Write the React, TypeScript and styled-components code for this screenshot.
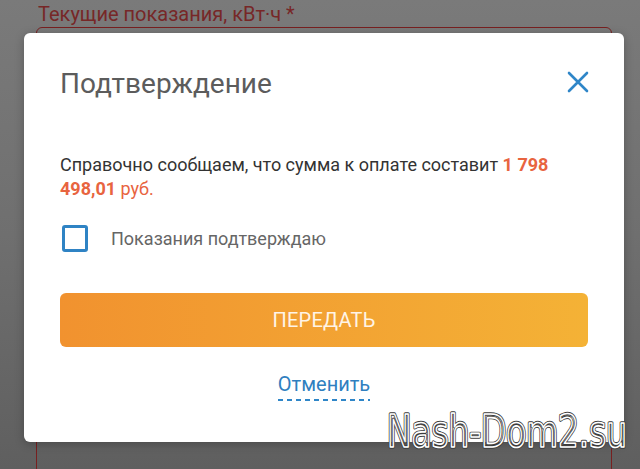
import React from "react";
import styled, { createGlobalStyle } from "styled-components";

const Global = createGlobalStyle`
  html, body { margin: 0; padding: 0; }
  body { font-family: Roboto, "Noto Sans", sans-serif; }
  * { box-sizing: border-box; }
`;

const Page = styled.div`
  position: relative;
  width: 640px;
  height: 469px;
  overflow: hidden;
  background: linear-gradient(to bottom, #7a7a7a 0%, #6f6f6f 50%, #5f5f5f 100%);
`;

const Form = styled.div`
  display: flex;
  flex-direction: column;
  padding: 2px 0 0 36px;
`;

const FieldLabel = styled.div`
  padding-left: 2px;
  font-size: 20px;
  line-height: 24px;
  color: #772727;
`;

const FieldBox = styled.div`
  margin-top: 1px;
  width: 576px;
  height: 520px;
  border: 1.5px solid #782020;
  border-radius: 6px;
`;

const Modal = styled.div`
  position: absolute;
  left: 24px;
  top: 33px;
  width: 600px;
  height: 409px;
  background: #ffffff;
  border-radius: 6px;
  box-shadow: 0 2px 10px rgba(0, 0, 0, 0.25);
  padding: 35px 36px 0 36px;
  display: flex;
  flex-direction: column;
`;

const Header = styled.div`
  display: flex;
  align-items: center;
  justify-content: space-between;
`;

const Title = styled.h2`
  margin: 0;
  font-weight: 400;
  font-size: 28px;
  line-height: 32px;
  color: #5c5c5c;
`;

const CloseButton = styled.button`
  border: 0;
  background: none;
  padding: 0;
  margin-right: -2px;
  margin-top: -4px;
  width: 24px;
  height: 24px;
  display: flex;
  align-items: center;
  justify-content: center;
  cursor: pointer;
`;

const Message = styled.p`
  margin: 53px 0 0 0;
  font-size: 18px;
  line-height: 24px;
  color: #333333;
`;

const Amount = styled.span<{ $bold?: boolean }>`
  color: #e8643f;
  font-weight: ${(p) => (p.$bold ? 700 : 400)};
`;

const CheckRow = styled.label`
  margin-top: 24px;
  display: flex;
  align-items: center;
  gap: 23px;
  cursor: pointer;
`;

const CheckBox = styled.span`
  margin-left: 2px;
  width: 26px;
  height: 27px;
  border: 3px solid #2f83c4;
  border-radius: 3px;
`;

const CheckText = styled.span`
  font-size: 18px;
  line-height: 24px;
  color: #666666;
`;

const SubmitButton = styled.button`
  margin-top: 41px;
  height: 54px;
  width: 100%;
  border: 0;
  border-radius: 6px;
  background: linear-gradient(to right, #f1922f, #f4b236);
  color: #fff4e6;
  font-family: Roboto, sans-serif;
  font-size: 20px;
  letter-spacing: 0.2px;
  text-transform: uppercase;
  cursor: pointer;
`;

const CancelWrap = styled.div`
  margin-top: 25px;
  display: flex;
  justify-content: center;
`;

const CancelLink = styled.a`
  font-size: 20px;
  line-height: 24px;
  color: #2f7fbf;
  text-decoration: none;
  padding-bottom: 5px;
  background: repeating-linear-gradient(to right, #2f86c8 0 5px, transparent 5px 9px) bottom left / 100% 2px no-repeat;
  cursor: pointer;
`;

const Watermark = styled.svg`
  position: absolute;
  left: 385px;
  top: 408px;
  overflow: visible;
  pointer-events: none;
  font-family: "DejaVu Sans Condensed", "DejaVu Sans", sans-serif;
  font-size: 45px;
`;

export default function App() {
  return (
    <>
      <Global />
      <Page>
        <Form>
          <FieldLabel>Текущие показания, кВт·ч *</FieldLabel>
          <FieldBox />
        </Form>
        <Modal>
          <Header>
            <Title>Подтверждение</Title>
            <CloseButton aria-label="Закрыть">
              <svg width="22" height="22" viewBox="0 0 22 22">
                <path d="M2 2 L20 20 M20 2 L2 20" stroke="#2f86c8" strokeWidth="2.6" strokeLinecap="round" fill="none" />
              </svg>
            </CloseButton>
          </Header>
          <Message>
            Справочно сообщаем, что сумма к оплате составит <Amount $bold>1 798 498,01</Amount>{" "}
            <Amount>руб.</Amount>
          </Message>
          <CheckRow>
            <CheckBox />
            <CheckText>Показания подтверждаю</CheckText>
          </CheckRow>
          <SubmitButton>Передать</SubmitButton>
          <CancelWrap>
            <CancelLink>Отменить</CancelLink>
          </CancelWrap>
        </Modal>
        <Watermark width="246" height="48" viewBox="0 0 246 48">
          <text x="2" y="39" textLength="240" lengthAdjust="spacingAndGlyphs" fill="none" stroke="#3c3c3c" strokeWidth="3.4" strokeLinejoin="round">
            Nash-Dom2.su
          </text>
          <text x="2" y="39" textLength="240" lengthAdjust="spacingAndGlyphs" fill="none" stroke="#ffffff" strokeWidth="1.6" strokeLinejoin="round">
            Nash-Dom2.su
          </text>
        </Watermark>
      </Page>
    </>
  );
}
